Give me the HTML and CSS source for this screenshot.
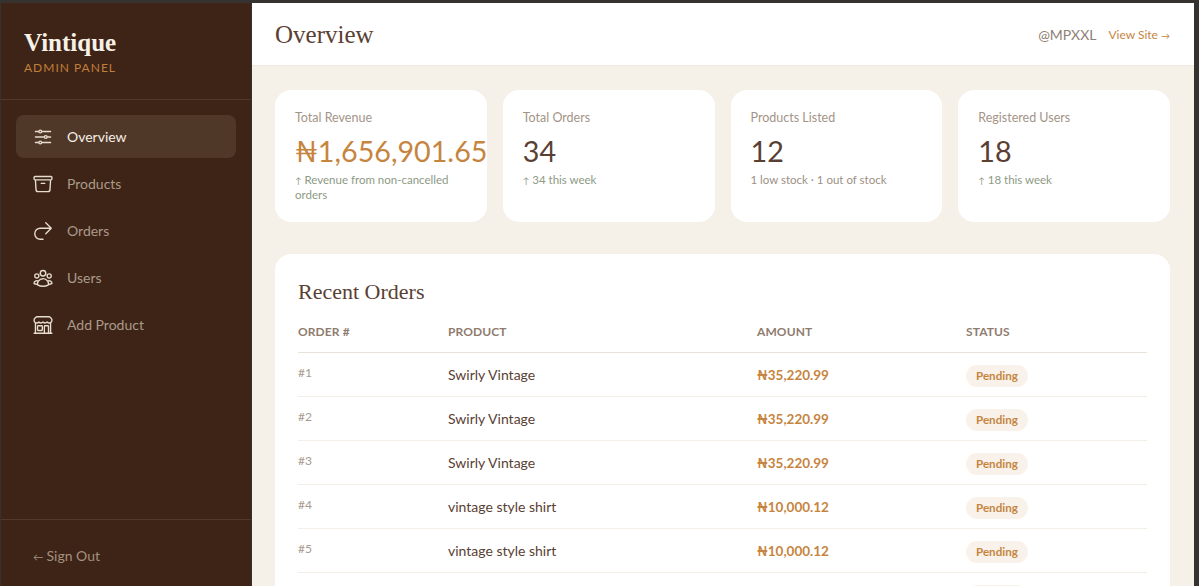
FILE: index.html
```html
<!DOCTYPE html>
<html lang="en">
<head>
    <meta charset="UTF-8">
    <meta name="viewport" content="width=device-width, initial-scale=1.0">
    <title>Vintique Admin</title>
    <link rel="stylesheet" href="styles.css">
</head>
<body>
    <div class="app">
        <aside class="sidebar">
            <div class="brand">
                <div class="brand-name">Vintique</div>
                <div class="brand-sub">ADMIN PANEL</div>
            </div>
            <nav class="nav">
                <a class="nav-item active">
                    <svg class="nav-icon" viewBox="0 0 24 24"><path d="M10.5 6h9.75M10.5 6a1.5 1.5 0 1 1-3 0m3 0a1.5 1.5 0 1 0-3 0M3.75 6H7.5m3 12h9.75m-9.75 0a1.5 1.5 0 0 1-3 0m3 0a1.5 1.5 0 0 0-3 0m-3.75 0H7.5m9-6h3.75m-3.75 0a1.5 1.5 0 0 1-3 0m3 0a1.5 1.5 0 0 0-3 0m-9.75 0h9.75"/></svg>
                    <span>Overview</span>
                </a>
                <a class="nav-item">
                    <svg class="nav-icon" viewBox="0 0 24 24"><path d="m20.25 7.5-.625 10.632a2.25 2.25 0 0 1-2.247 2.118H6.622a2.25 2.25 0 0 1-2.247-2.118L3.75 7.5M10 11.25h4M3.375 7.5h17.25c.621 0 1.125-.504 1.125-1.125v-1.5c0-.621-.504-1.125-1.125-1.125H3.375c-.621 0-1.125.504-1.125 1.125v1.5c0 .621.504 1.125 1.125 1.125Z"/></svg>
                    <span>Products</span>
                </a>
                <a class="nav-item">
                    <svg class="nav-icon" viewBox="0 0 24 24"><path d="m15 15 6-6m0 0-6-6m6 6H9a6 6 0 0 0 0 12h3"/></svg>
                    <span>Orders</span>
                </a>
                <a class="nav-item">
                    <svg class="nav-icon" viewBox="0 0 24 24"><path d="M18 18.72a9.094 9.094 0 0 0 3.741-.479 3 3 0 0 0-4.682-2.72m.94 3.198.001.031c0 .225-.012.447-.037.666A11.944 11.944 0 0 1 12 21c-2.17 0-4.207-.576-5.963-1.584A6.062 6.062 0 0 1 6 18.719m12 0a5.971 5.971 0 0 0-.941-3.197m0 0A5.995 5.995 0 0 0 12 12.75a5.995 5.995 0 0 0-5.058 2.772m0 0a3 3 0 0 0-4.681 2.72 8.986 8.986 0 0 0 3.74.477m.94-3.197a5.971 5.971 0 0 0-.94 3.197M15 6.75a3 3 0 1 1-6 0 3 3 0 0 1 6 0Zm6 3a2.25 2.25 0 1 1-4.5 0 2.25 2.25 0 0 1 4.5 0Zm-13.5 0a2.25 2.25 0 1 1-4.5 0 2.25 2.25 0 0 1 4.5 0Z"/></svg>
                    <span>Users</span>
                </a>
                <a class="nav-item">
                    <svg class="nav-icon" viewBox="0 0 24 24"><path d="M13.5 21v-7.5a.75.75 0 0 1 .75-.75h3a.75.75 0 0 1 .75.75V21m-4.5 0H2.36m11.14 0H18m0 0h3.64m-1.39 0V9.349M3.75 21V9.349m0 0a3.001 3.001 0 0 0 3.75-.615A2.993 2.993 0 0 0 9.75 9.75c.896 0 1.7-.393 2.25-1.016a2.993 2.993 0 0 0 2.25 1.016c.896 0 1.7-.393 2.25-1.016a3.001 3.001 0 0 0 3.75.615m-16.5 0a3.004 3.004 0 0 1-.621-4.72l1.189-1.19A1.5 1.5 0 0 1 5.378 3h13.243a1.5 1.5 0 0 1 1.06.44l1.19 1.189a3 3 0 0 1-.621 4.72M6.75 18h3.75a.75.75 0 0 0 .75-.75V13.5a.75.75 0 0 0-.75-.75H6.75a.75.75 0 0 0-.75.75v3.75c0 .414.336.75.75.75Z"/></svg>
                    <span>Add Product</span>
                </a>
            </nav>
            <div class="sidebar-foot">
                <a class="signout"><span class="arrow">←</span>Sign Out</a>
            </div>
        </aside>

        <main class="main">
            <header class="topbar">
                <h1 class="page-title">Overview</h1>
                <div class="topbar-right">
                    <span class="handle">@MPXXL</span>
                    <a class="view-site">View Site <span class="arrow-end">→</span></a>
                </div>
            </header>

            <div class="content">
                <section class="stats">
                    <div class="stat-card">
                        <div class="stat-label">Total Revenue</div>
                        <div class="stat-value accent">₦1,656,901.65</div>
                        <div class="stat-note up"><span class="arrow">↑</span>Revenue from non-cancelled orders</div>
                    </div>
                    <div class="stat-card">
                        <div class="stat-label">Total Orders</div>
                        <div class="stat-value">34</div>
                        <div class="stat-note up"><span class="arrow">↑</span>34 this week</div>
                    </div>
                    <div class="stat-card">
                        <div class="stat-label">Products Listed</div>
                        <div class="stat-value">12</div>
                        <div class="stat-note">1 low stock · 1 out of stock</div>
                    </div>
                    <div class="stat-card">
                        <div class="stat-label">Registered Users</div>
                        <div class="stat-value">18</div>
                        <div class="stat-note up"><span class="arrow">↑</span>18 this week</div>
                    </div>
                </section>

                <section class="panel">
                    <h2 class="panel-title">Recent Orders</h2>
                    <table class="orders">
                        <thead>
                            <tr>
                                <th class="col-id">ORDER #</th>
                                <th class="col-product">PRODUCT</th>
                                <th class="col-amount">AMOUNT</th>
                                <th>STATUS</th>
                            </tr>
                        </thead>
                        <tbody>
                            <tr>
                                <td class="order-id">#1</td>
                                <td>Swirly Vintage</td>
                                <td class="amount">₦35,220.99</td>
                                <td class="status"><span class="badge">Pending</span></td>
                            </tr>
                            <tr>
                                <td class="order-id">#2</td>
                                <td>Swirly Vintage</td>
                                <td class="amount">₦35,220.99</td>
                                <td class="status"><span class="badge">Pending</span></td>
                            </tr>
                            <tr>
                                <td class="order-id">#3</td>
                                <td>Swirly Vintage</td>
                                <td class="amount">₦35,220.99</td>
                                <td class="status"><span class="badge">Pending</span></td>
                            </tr>
                            <tr>
                                <td class="order-id">#4</td>
                                <td>vintage style shirt</td>
                                <td class="amount">₦10,000.12</td>
                                <td class="status"><span class="badge">Pending</span></td>
                            </tr>
                            <tr>
                                <td class="order-id">#5</td>
                                <td>vintage style shirt</td>
                                <td class="amount">₦10,000.12</td>
                                <td class="status"><span class="badge">Pending</span></td>
                            </tr>
                            <!-- next row runs off the window, only the top of its pill shows -->
                            <tr>
                                <td></td>
                                <td></td>
                                <td></td>
                                <td class="status"><span class="badge badge-blank">&nbsp;</span></td>
                            </tr>
                        </tbody>
                    </table>
                </section>
            </div>
        </main>
    </div>
</body>
</html>
```

FILE: styles.css
```css
* {
    margin: 0;
    padding: 0;
    box-sizing: border-box;
}

html, body {
    height: 586px;
    overflow: hidden;
}

body {
    background-color: #36322f;
    padding: 3px 5px 0 1px;
    font-family: "Lato", "Noto Sans", sans-serif;
    color: #5a4033;
}

.app {
    display: flex;
    height: 583px;
    overflow: hidden;
}

.arrow {
    display: inline-block;
    margin-right: 3px;
    font-size: 0.75em;
    line-height: 1;
}

.arrow-end {
    font-size: 0.75em;
}

/* sidebar */
.sidebar {
    width: 250px;
    flex-shrink: 0;
    display: flex;
    flex-direction: column;
    background-color: #3d2416;
}

.brand {
    height: 97px;
    padding: 25px 23px 0;
    border-bottom: 1px solid #523828;
}

.brand-name {
    font-family: "Liberation Serif", serif;
    font-size: 25px;
    font-weight: 700;
    line-height: 30px;
    color: #f7f1e8;
}

.brand-sub {
    margin-top: 2px;
    font-size: 12px;
    line-height: 15px;
    letter-spacing: 1px;
    color: #c17f3c;
}

.nav {
    flex: 1;
    display: flex;
    flex-direction: column;
    gap: 4px;
    padding: 15px 15px 0;
}

.nav-item {
    display: flex;
    align-items: center;
    gap: 13px;
    height: 43px;
    padding: 0 16px;
    border-radius: 8px;
    font-size: 14px;
    color: #ab9a8a;
}

.nav-item.active {
    background-color: #503829;
    color: #f5efe6;
}

.nav-icon {
    width: 22px;
    height: 22px;
    flex-shrink: 0;
    fill: none;
    stroke: #e6dccf;
    stroke-width: 1.5;
    stroke-linecap: round;
    stroke-linejoin: round;
}

.sidebar-foot {
    height: 67px;
    padding: 25px 32px 0;
    border-top: 1px solid #523828;
}

.signout {
    font-size: 14px;
    line-height: 17px;
    color: #a39180;
}

/* main */
.main {
    flex: 1;
    min-width: 0;
    margin-left: 1px;
    display: flex;
    flex-direction: column;
    background-color: #f5f0e8;
}

.topbar {
    height: 63px;
    flex-shrink: 0;
    display: flex;
    align-items: center;
    justify-content: space-between;
    padding: 1px 24px 0 23px;
    background-color: #ffffff;
    border-bottom: 1px solid #efe9df;
}

.page-title {
    font-family: "Liberation Serif", serif;
    font-size: 25px;
    font-weight: 400;
    color: #5a4033;
}

.topbar-right {
    display: flex;
    align-items: center;
    gap: 12px;
}

.handle {
    font-size: 14px;
    color: #8f8074;
}

.view-site {
    font-size: 12px;
    color: #c6853f;
}

.content {
    padding: 24px 24px 0 23px;
}

.stats {
    display: grid;
    grid-template-columns: repeat(4, minmax(0, 1fr));
    gap: 16px;
}

.stat-card {
    height: 132px;
    padding: 20px;
    background-color: #ffffff;
    border-radius: 16px;
}

.stat-label {
    font-size: 12.5px;
    line-height: 15px;
    color: #a39488;
}

.stat-value {
    margin-top: 8px;
    font-size: 28.7px;
    line-height: 36px;
    color: #5a4033;
    white-space: nowrap;
}

.stat-value.accent {
    color: #c6853f;
}

.stat-note {
    margin-top: 3px;
    font-size: 11.5px;
    line-height: 15px;
    color: #9c8f84;
}

.stat-note.up {
    color: #8d9a84;
}

.panel {
    margin-top: 32px;
    padding: 25px 23px 0;
    background-color: #ffffff;
    border-radius: 16px 16px 0 0;
}

.panel-title {
    font-family: "Liberation Serif", serif;
    font-size: 22px;
    font-weight: 400;
    line-height: 26px;
    color: #5a4033;
}

.orders {
    width: 100%;
    margin-top: 10px;
    border-collapse: collapse;
    table-layout: fixed;
}

.orders th {
    height: 37px;
    padding-bottom: 4px;
    text-align: left;
    font-size: 12px;
    font-weight: 700;
    letter-spacing: 0.1px;
    color: #8f7c6f;
    border-bottom: 1px solid #e9e2d6;
}

.col-id { width: 150px; }
.col-product { width: 309px; }
.col-amount { width: 209px; }

.orders td {
    height: 44px;
    font-size: 14px;
    color: #5a4033;
    border-bottom: 1px solid #f3eee6;
}

.orders td.order-id {
    padding-bottom: 4px;
    font-size: 12px;
    color: #a89a8e;
}

.orders td.amount {
    padding-top: 1px;
    font-weight: 700;
    font-size: 13.5px;
    color: #c6853f;
}

.orders td.status {
    padding-top: 3px;
}

.badge {
    display: inline-block;
    padding: 3px 10px;
    border-radius: 12px;
    background-color: #f8f2ea;
    font-size: 11.6px;
    font-weight: 700;
    line-height: 16px;
    color: #c6853f;
}

.badge-blank {
    width: 62px;
}
```
